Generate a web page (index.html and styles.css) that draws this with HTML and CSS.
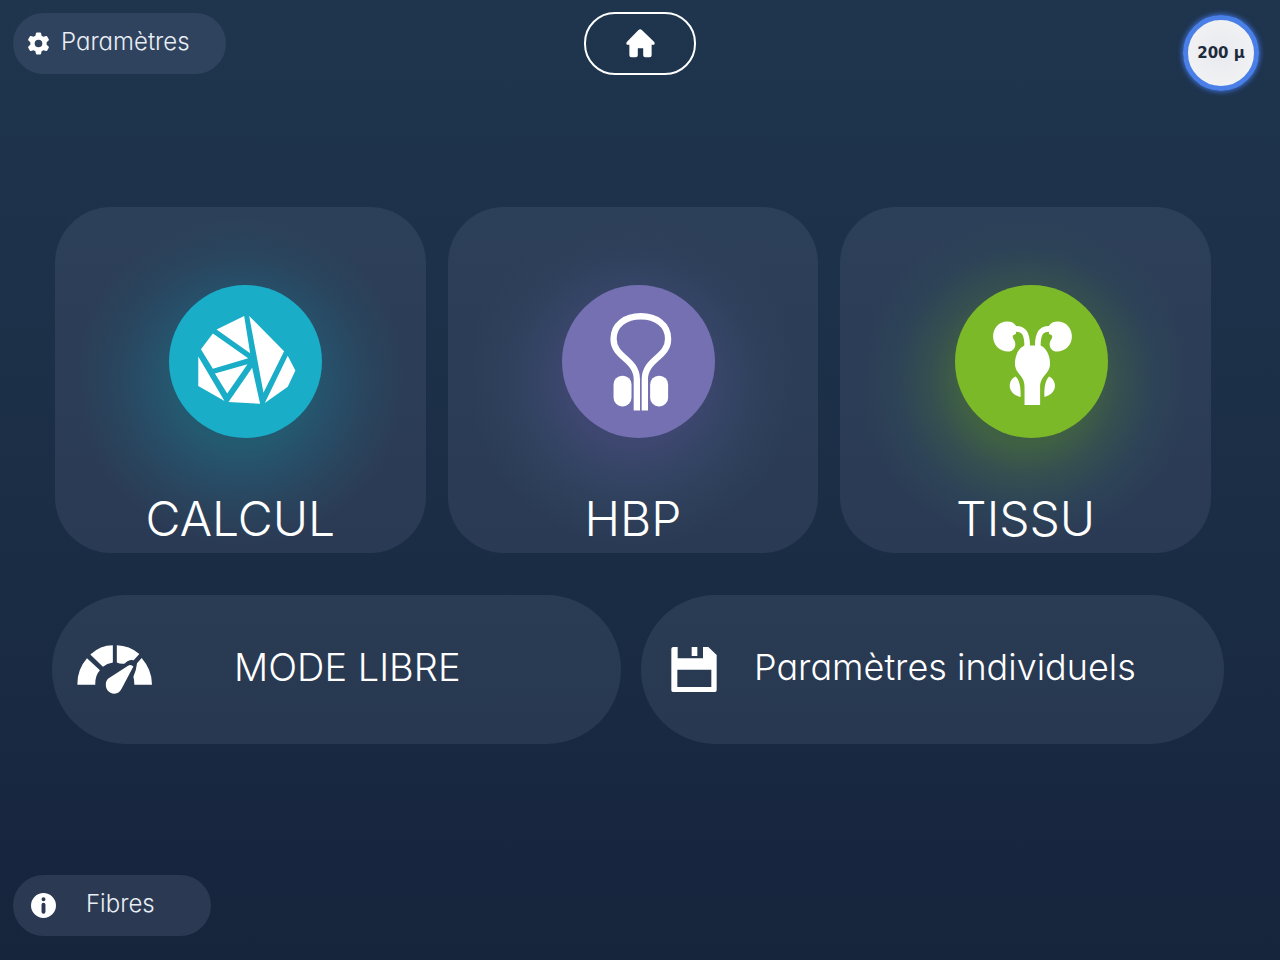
FILE: index.html
```html
<!DOCTYPE html>
<html lang="fr">
<head>
    <meta charset="UTF-8">
    <meta name="viewport" content="width=device-width, initial-scale=1.0">
    <title>Accueil</title>
    <link rel="stylesheet" href="styles.css">
</head>
<body>
    <header class="topbar">
        <button type="button" class="pill-btn settings-btn">
            <svg class="gear-icon" viewBox="0 0 24 24" aria-hidden="true">
                <path fill-rule="evenodd" d="M9.3 1.2Q9.5.5 10.3.5h3.4q.8 0 1 .7l.5 2.6 2 1.2 2.6-.9q.7-.2 1.1.4l1.8 3.1q.4.7-.2 1.2l-2 1.8v2.8l2 1.8q.6.5.2 1.2l-1.8 3.1q-.4.6-1.1.4l-2.6-.9-2 1.2-.5 2.6q-.2.7-1 .7h-3.4q-.8 0-1-.7l-.5-2.6-2-1.2-2.6.9q-.7.2-1.1-.4l-1.8-3.1q-.4-.7.2-1.2l2-1.8v-2.8l-2-1.8q-.6-.5-.2-1.2l1.8-3.1q.4-.6 1.1-.4l2.6.9 2-1.2zM12 8a4 4 0 1 0 0 8 4 4 0 0 0 0-8z"/>
            </svg>
            <span>Paramètres</span>
        </button>
        <button type="button" class="home-btn" aria-label="Accueil">
            <svg class="home-icon" viewBox="169 89 86 86" aria-hidden="true">
                <path d="M206 92q5-5 10 0l36 35q4 5 0 9h-7v31q0 6-6 6h-13q-6 0-6-6v-21h-16v21q0 6-6 6h-13q-6 0-6-6v-31h-7q-4-4 0-9z"/>
            </svg>
        </button>
        <div class="fiber-badge">200 µ</div>
    </header>

    <main>
        <div class="cards">
            <button type="button" class="card card-calcul">
                <svg class="card-icon" viewBox="28 28 460 460" aria-hidden="true">
                    <path d="M254 121l18 112-101-71zM269 121l105 106-62 125zM160 174l106 74-106 32-36-59zM116 243l79 134-79-45zM385 241l23 44-23 49-69 49zM264 266l-61 88-37-60zM278 277l24 108-95-5z"/>
                </svg>
                <span class="card-label">CALCUL</span>
            </button>
            <button type="button" class="card card-hbp">
                <svg class="card-icon" viewBox="36 28 460 460" aria-hidden="true">
                    <path class="line" d="M261 405V312C261 250 191 247 191 190C191 147 227 122 273 122S355 147 355 190C355 247 285 250 285 312V405"/>
                    <rect x="191" y="301" width="54" height="92" rx="26"/>
                    <rect x="301" y="301" width="54" height="92" rx="26"/>
                </svg>
                <span class="card-label">HBP</span>
            </button>
            <button type="button" class="card card-tissu">
                <svg class="card-icon" viewBox="30 28 462 462" aria-hidden="true">
                    <path d="M216 153C209 142 200 138 188 138C162 138 145 159 145 183C145 210 165 229 190 229C211 229 218 206 207 192C202 184 204 178 214 176zM312 153C319 142 328 138 340 138C366 138 383 159 383 183C383 210 363 229 338 229C317 229 310 206 321 192C326 184 324 178 314 176z"/>
                    <path class="tube" d="M205 161C237 157 248 172 248 213M323 161C291 157 280 172 280 213"/>
                    <path d="M240 211h48C305 218 317 240 317 265C317 297 288 300 287 335V390H240V335C240 300 211 297 211 265C211 240 223 218 240 211z"/>
                    <path d="M213 304C190 314 184 355 228 366C229 338 226 318 213 304zM314 304C337 314 343 355 300 366C299 338 302 318 314 304z"/>
                </svg>
                <span class="card-label">TISSU</span>
            </button>
        </div>

        <div class="modes">
            <button type="button" class="mode-btn mode-free">
                <svg class="gauge-icon" viewBox="79 164 226 148" aria-hidden="true">
                    <path d="M80 284Q79 238 109 204L148 240Q133 256 134 284zM119 193Q149 165 187 165V217Q169 220 157 230zM199 165Q237 166 267 191L250 210Q235 206 223 220Q211 222 199 217zM274 203Q306 240 305 284H252Q252 270 249 260Q258 240 260 219z"/>
                    <path d="M233 227Q241 221 249 229L215 293Q207 311 192 311C174 311 164 297 166 279Q167 268 178 262z"/>
                </svg>
                <span class="mode-label">MODE LIBRE</span>
            </button>
            <button type="button" class="mode-btn mode-custom">
                <svg class="floppy-icon" viewBox="109 169 136 135" aria-hidden="true">
                    <path fill-rule="evenodd" d="M115 169h13v34h76v-34h16l25 24v106q0 5-5 5H114q-5 0-5-5V175q0-6 6-6zM127 237v52h102v-52zM170 169h17v27h-17z"/>
                </svg>
                <span class="mode-label">Paramètres individuels</span>
            </button>
        </div>
    </main>

    <footer>
        <button type="button" class="pill-btn fibers-btn">
            <svg class="info-icon" viewBox="0 0 76 76" aria-hidden="true">
                <path fill-rule="evenodd" d="M38 0a38 38 0 1 0 0 76 38 38 0 0 0 0-76zM38 13a6 6 0 1 1 0 12 6 6 0 0 1 0-12zM32 36a6 6 0 0 1 12 0v21a6 6 0 0 1-12 0z"/>
            </svg>
            <span>Fibres</span>
        </button>
    </footer>
</body>
</html>
```
FILE: styles.css
```css
* {
    box-sizing: border-box;
}
body {
    margin: 0;
    min-height: 100vh;
    display: flex;
    flex-direction: column;
    font-family: Inter, "Open Sans", sans-serif;
    font-weight: 300;
    /* single-storey a */
    font-feature-settings: "cv11";
    color: #fff;
    background: linear-gradient(#1f354e, #1b2e46 50%, #16243c);
}
button {
    font: inherit;
    font-feature-settings: inherit;
    color: inherit;
    border: none;
    padding: 0;
    cursor: pointer;
}
svg {
    display: block;
    flex: none;
    fill: #fff;
}

/* top bar */
.topbar {
    display: grid;
    grid-template-columns: 1fr auto 1fr;
    align-items: start;
    padding: 12px 13px 0;
}
.pill-btn {
    display: flex;
    align-items: center;
    height: 61px;
    border-radius: 31px;
    font-size: 24px;
    line-height: 28px;
    color: #e9eef6;
}
.pill-btn span {
    margin-bottom: 3px;
}
.settings-btn {
    width: 213px;
    margin-top: 1px;
    padding-left: 14px;
    gap: 11px;
    background: #30435e;
}
.gear-icon {
    width: 23px;
    height: 23px;
}
.home-btn {
    display: flex;
    align-items: center;
    justify-content: center;
    width: 112px;
    height: 63px;
    border: 2px solid #fff;
    border-radius: 31px;
    background: none;
}
.home-icon {
    width: 29px;
    height: 29px;
}
.fiber-badge {
    justify-self: end;
    display: flex;
    align-items: center;
    justify-content: center;
    width: 76px;
    height: 76px;
    margin: 3px 8px 0 0;
    border: 5px solid #4a7fe8;
    border-radius: 50%;
    background: radial-gradient(#e9eaee, #f4f4f6);
    box-shadow: 0 0 5px 1px #3d6fd6;
    font-family: "DejaVu Sans", sans-serif;
    font-size: 15px;
    font-weight: 700;
    color: #1c2a3c;
}

/* main menu */
main {
    flex: 1;
    display: flex;
    flex-direction: column;
    justify-content: center;
    gap: 42px;
    padding-bottom: 16px;
}
.cards {
    display: grid;
    grid-template-columns: repeat(3, 1fr);
    gap: 22px;
    padding: 0 69px 0 55px;
}
.card {
    display: flex;
    flex-direction: column;
    align-items: center;
    height: 346px;
    padding-top: 78px;
    border-radius: 56px;
}
.card-calcul {
    background: radial-gradient(circle, #245a70 65px, #27506a 90px, #2a455e 125px, #2c3e5700 165px), linear-gradient(#2d4059, #2b3a54);
}
.card-hbp {
    background: radial-gradient(circle, #3e4770 65px, #354465 95px, #2e405b 130px, #2c3e5700 165px), linear-gradient(#2d4059, #2b3a54);
}
.card-tissu {
    background: radial-gradient(circle, #406044 65px, #354f50 95px, #2d4357 130px, #2c3e5700 165px), linear-gradient(#2d4059, #2b3a54);
}
.card-icon {
    width: 153px;
    height: 153px;
    margin-left: 11px;
    border-radius: 50%;
}
.card-calcul .card-icon {
    background: #1aadc8;
}
.card-hbp .card-icon {
    background: #7470b2;
}
.card-tissu .card-icon {
    background: #7bb929;
}
.line {
    fill: none;
    stroke: #fff;
    stroke-width: 19;
}
.tube {
    fill: none;
    stroke: #fff;
    stroke-width: 17;
}
.card-label {
    margin-top: 53px;
    font-size: 48px;
    line-height: 56px;
}

/* wide buttons */
.modes {
    display: grid;
    grid-template-columns: 569fr 583fr;
    gap: 20px;
    padding: 0 56px 0 52px;
}
.mode-btn {
    display: flex;
    align-items: center;
    height: 149px;
    padding-left: 25px;
    border-radius: 75px;
    background: linear-gradient(#2a3b54, #273850);
    font-size: 36px;
    line-height: 44px;
}
.mode-btn .mode-label {
    margin-left: 37px;
    margin-bottom: 4px;
}
.mode-free .mode-label {
    margin-left: 82px;
    font-size: 38px;
}
.mode-custom {
    padding-left: 30px;
}
.gauge-icon {
    width: 75px;
    height: 49px;
}
.floppy-icon {
    width: 46px;
    height: 45px;
}

footer {
    padding: 0 13px 24px;
}
.fibers-btn {
    width: 198px;
    padding-left: 18px;
    gap: 30px;
    background: #2b3a52;
}
.info-icon {
    width: 25px;
    height: 25px;
}
```
